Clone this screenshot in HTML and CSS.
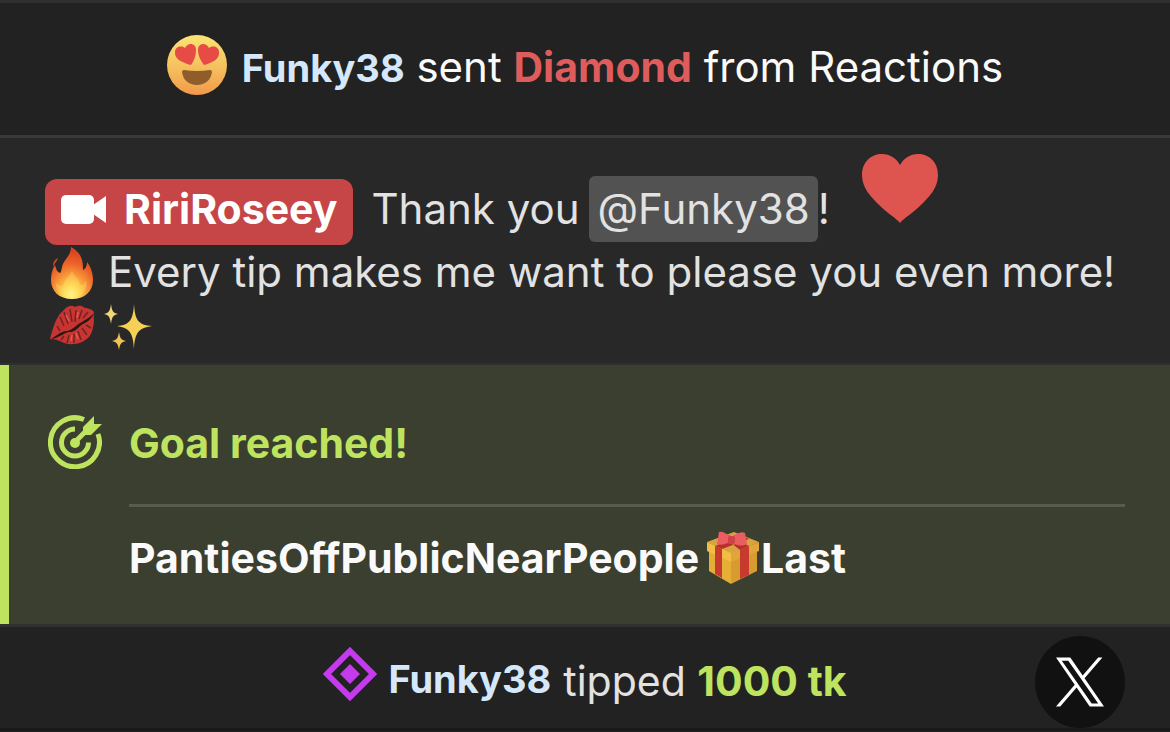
FILE: index.html
```html
<!DOCTYPE html>
<html lang="en">
<head>
<meta charset="utf-8">
<meta name="viewport" content="width=device-width, initial-scale=1">
<title>Chat</title>
<link rel="stylesheet" href="styles.css">
</head>
<body>
<main class="chat">
  <section class="event">
    <svg class="face" viewBox="0 0 60 60" role="img" aria-label="Heart eyes">
      <defs><linearGradient id="skin" x1="0" y1="0" x2="0" y2="1"><stop offset="0" stop-color="#fbe474"/><stop offset=".5" stop-color="#f5c35f"/><stop offset="1" stop-color="#f2994a"/></linearGradient></defs>
      <circle cx="30" cy="30" r="30" fill="url(#skin)"/>
      <path d="M24 30C16 28 7 24 8 17C8 12 14 10 18 13C21 7 29 8 29 15C29 21 27 26 24 30Z" fill="#e64c45"/>
      <path d="M37 30C34 26 31 21 31 15C31 8 39 7 42 13C46 10 52 12 52 17C53 24 45 28 37 30Z" fill="#e64c45"/>
      <path d="M17 35Q30 37 43 35Q45 35 45 37C44 45 38 50 30 50S16 45 15 37Q15 35 17 35Z" fill="#8f5c2c"/>
    </svg>
    <p class="event-text"><b class="user">Funky38</b> sent <b class="gift-name">Diamond</b> from Reactions</p>
  </section>

  <section class="message">
    <div class="line first">
      <div class="lead">
        <button class="host" type="button">
          <svg class="camera" viewBox="0 0 45 30" aria-hidden="true"><rect y="1" width="33" height="29" rx="5" fill="#fff"/><path d="M32 11L45 2V29L32 20Z" fill="#fff"/></svg>
          <span>RiriRoseey</span>
        </button>
        <span class="thanks">Thank you</span>
        <span class="mention-wrap"><a class="mention" href="#">@Funky38</a>!</span>
      </div>
      <svg class="heart" viewBox="0 0 76 69" role="img" aria-label="Heart"><path d="M38 69C34 64 25 59 15 49C5 39 0 31 0 21C0 8 9 0 20 0C28 0 34 4 38 11C42 4 48 0 56 0C67 0 76 8 76 21C76 31 71 39 61 49C51 59 42 64 38 69Z" fill="#de544e"/></svg>
    </div>
    <div class="line second">
      <svg class="fire" viewBox="0 0 42 52" role="img" aria-label="Fire">
        <defs><radialGradient id="flame" cx=".48" cy=".92" r=".85"><stop offset="0" stop-color="#fff9a8"/><stop offset=".18" stop-color="#fde25a"/><stop offset=".42" stop-color="#f9a23b"/><stop offset=".72" stop-color="#ec6229"/><stop offset="1" stop-color="#d9431f"/></radialGradient></defs>
        <path d="M20 0C31 6 32 14 32 23C35 22 36 18 36 15C40 20 42 27 42 33C42 45 33 52 21 52C8 52 0 44 0 33C0 27 1 23 4 18C5 22 6 25 9 26C11 25 10 20 13 15C17 9 20 6 20 0Z" fill="url(#flame)"/>
        <path d="M7 11C6 15 3 16 3 20C1 17 3 13 7 11Z" fill="#d9431f"/>
        <path d="M21 23C23 30 29 32 29 38C32 38 34 36 35 33C37 43 31 51 21 51C11 51 5 45 5 36C8 39 11 40 13 38C13 31 20 29 21 23Z" fill="#ffe566" opacity=".35"/>
      </svg>
      <span>Every tip makes me want to please you even more!</span>
    </div>
    <div class="line third">
      <svg class="kiss" viewBox="0 0 46 42" role="img" aria-label="Kiss mark">
        <path d="M1 35C4 23 8 11 14 7C17 3 22 0 26 3C29 2 32 1 34 3C39 5 42 4 45 8C44 13 46 17 44 23C43 31 39 35 33 38C26 41 19 41 13 38C9 36 6 35 1 35Z" fill="#c73533"/>
        <path d="M2 35C9 31 12 27 18 27C24 26 28 20 33 18C37 15 41 14 45 9C42 16 38 18 34 20C30 22 27 28 21 28C15 28 11 34 2 35Z" fill="#2a1715"/>
        <path d="M11 13L15 22M15 8L19 20M21 5L23 18M27 6L26 18M33 6L30 15M39 8L34 14M8 22L11 27M18 39L20 31M25 39L25 30M32 36L29 27M38 31L33 24M42 24L37 21M12 36L15 32" stroke="#702322" stroke-width="1.5"/>
        <path d="M17 11L20 17M29 8L28 14M22 37L23 31M29 35L27 29" stroke="#e85a50" stroke-width="1.5"/>
      </svg>
      <svg class="sparkles" viewBox="0 0 48 46" role="img" aria-label="Sparkles">
        <path d="M30 0C31 16 34 21 48 22C34 24 31 29 30 45C29 29 26 24 13 22C26 21 29 16 30 0Z" fill="#f6cf57"/>
        <path d="M7 0C8 7 9 9 14 10C9 11 8 13 7 20C6 13 5 11 0 10C5 9 6 7 7 0Z" fill="#f3d678"/>
        <path d="M15 28C16 34 17 36 22 37C17 38 16 40 15 46C14 40 13 38 8 37C13 36 14 34 15 28Z" fill="#efc456"/>
      </svg>
    </div>
  </section>

  <section class="goal">
    <svg class="target" viewBox="0 0 54 54" aria-hidden="true" fill="none" stroke="#bee35f">
      <path d="M36 4.500A24.500 24.500 0 1 0 50 19" stroke-width="5"/>
      <path d="M27 14A13.500 13.500 0 1 0 40.500 27.500" stroke-width="5"/>
      <path d="M27 27L43 11" stroke-width="5"/>
      <circle cx="27" cy="28" r="5" fill="#bee35f" stroke="none"/>
      <path d="M35 12L46 1V9H54L43 20H35Z" fill="#bee35f" stroke="none"/>
    </svg>
    <h2 class="goal-title">Goal reached!</h2>
    <p class="goal-text"><span>PantiesOffPublicNearPeople</span><svg class="present" viewBox="0 0 52 53" role="img" aria-label="Gift">
      <path d="M0 11L27 1L52 11L24 23Z" fill="#d9a440"/>
      <path d="M2 19L24 29V53L2 40Z" fill="#e6ae36"/>
      <path d="M24 29L50 19V40L24 53Z" fill="#d79b31"/>
      <path d="M0 11L24 22V31L0 20Z" fill="#f1bd45"/>
      <path d="M24 22L52 11V20L24 31Z" fill="#e1a53b"/>
      <path d="M8 15L15 18V47L8 43ZM33 19L42 15V44L33 48Z" fill="#c63b2d"/>
      <path d="M8 15L34 4L42 8L15 18ZM15 5L33 19L42 15L22 4Z" fill="#b92f2c"/>
      <path d="M24 6C19 2 15 0 12 1L10 13C16 15 20 12 24 11C29 14 34 16 40 13L38 2C34 0 29 3 24 6Z" fill="#ea5d61"/>
      <rect x="21" y="5" width="7" height="8" rx="2" fill="#cf4249"/>
    </svg><span>Last</span></p>
  </section>

  <section class="tip">
    <svg class="gem" viewBox="0 0 54 54" aria-hidden="true"><path d="M27 4L50 27L27 50L4 27Z" fill="none" stroke="#c43bed" stroke-width="6"/><path d="M27 17L37 27L27 37L17 27Z" fill="#c43bed"/></svg>
    <p class="tip-text"><b class="user">Funky38</b><span>tipped <b class="amount">1000 tk</b></span></p>
    <button class="share" type="button" aria-label="X">
      <svg class="x-logo" viewBox="0 0 1200 1227" aria-hidden="true"><path fill="#fff" d="M714.163 519.284L1160.890 0H1055.030L667.137 450.887L357.328 0H0L468.492 681.821L0 1226.370H105.866L515.491 750.218L842.672 1226.370H1200L714.137 519.284H714.163ZM569.165 687.828L521.697 619.934L144.011 79.694H306.615L611.412 515.685L658.880 583.579L1055.080 1150.300H892.476L569.165 687.854V687.828Z"/></svg>
    </button>
  </section>
</main>
</body>
</html>
```
FILE: styles.css
```css
* { box-sizing: border-box; }
body {
  margin: 0;
  background: #222;
  color: #e2e2e2;
  font-family: Inter, "Liberation Sans", sans-serif;
  font-size: 41px;
  font-variant-ligatures: no-contextual;
  line-height: 54px;
}
p, h2 { margin: 0; }
svg { display: block; flex: none; }
button { border: 0; font: inherit; color: inherit; cursor: pointer; }
.chat { border-top: 3px solid #2f2f2f; border-bottom: 3px solid #1a181a; }
.user { color: #d5e8fb; font-size: 38px; font-weight: 700; line-height: 1; }
.event {
  display: flex;
  justify-content: center;
  gap: 15px;
  padding: 32px 24px 37px;
  border-bottom: 3px solid #393939;
}
.face { width: 60px; height: 60px; }
.event-text { color: #fafafa; font-size: 42px; line-height: 63px; }
.gift-name { color: #df5c5c; font-size: 41px; font-weight: 700; line-height: 1; }
.message {
  padding: 16px 45px 13px;
  background: #282828;
  border-bottom: 2px solid #303030;
  font-size: 42px;
}
.line { display: flex; }
.first { align-items: flex-end; gap: 32px; }
.lead { display: flex; align-items: baseline; }
.host {
  display: flex;
  align-items: baseline;
  gap: 18px;
  padding: 0 16px 6px;
  border-radius: 12px;
  background: #c64547;
  color: #fff;
  font-size: 41px;
  font-weight: 700;
  line-height: 60px;
}
.camera { width: 45px; height: 30px; margin-bottom: -5px; }
.thanks { margin: 0 10px 0 18px; }
.mention {
  display: inline-block;
  padding: 0 8px;
  border-radius: 6px;
  background: #525252;
  color: inherit;
  line-height: 66px;
  text-decoration: none;
}
.heart { width: 76px; height: 69px; margin-bottom: 22px; }
.second { gap: 15px; padding-left: 6px; }
.fire { width: 42px; height: 52px; margin-top: 2px; }
.third { gap: 9px; padding: 5px 0 0 4px; }
.kiss { width: 46px; height: 42px; }
.sparkles { width: 48px; height: 46px; }
.goal {
  display: grid;
  grid-template-columns: 54px 1fr;
  column-gap: 27px;
  padding: 50px 45px 39px 39px;
  border-left: 9px solid #bee35f;
  background: #3b3f2f;
}
.target { width: 54px; height: 54px; }
.goal-title {
  padding: 1px 0 34px;
  border-bottom: 3px solid #585c4c;
  color: #bee35f;
  font-size: 41px;
  font-weight: 700;
}
.goal-text {
  grid-column: 2;
  display: flex;
  padding-top: 24px;
  color: #fafafa;
  font-weight: 700;
}
.present { width: 52px; height: 53px; margin: 0 2px 0 8px; }
.tip {
  position: relative;
  display: flex;
  justify-content: center;
  gap: 11px;
  padding: 20px 24px 27px;
  border-top: 3px solid #303030;
}
.gem { width: 54px; height: 54px; }
.tip-text { display: flex; gap: 12px; line-height: 68px; height: 54px; }
.tip-text .user { line-height: 64px; }
.amount { color: #bee35f; font-weight: 700; }
.share {
  position: absolute;
  top: 9px;
  right: 45px;
  display: grid;
  place-items: center;
  width: 90px;
  height: 92px;
  padding: 0;
  border-radius: 50%;
  background: #111;
}
.x-logo { width: 48px; height: 50px; }
```
